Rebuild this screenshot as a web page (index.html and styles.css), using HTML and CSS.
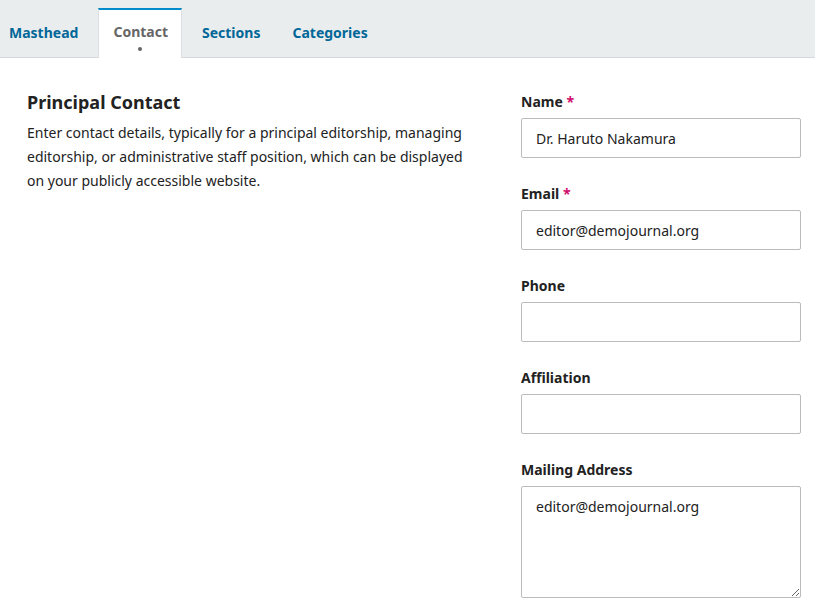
FILE: index.html
```html
<!DOCTYPE html>
<html lang="en">
<head>
<meta charset="UTF-8" />
<title>Journal Settings - Contact</title>
<link rel="stylesheet" href="styles.css">
</head>
<body>

<nav class="tabs">
  <a href="#" class="tab tab-first">Masthead</a>
  <a href="#" class="tab tab-active">Contact</a>
  <a href="#" class="tab tab-sections">Sections</a>
  <a href="#" class="tab">Categories</a>
</nav>

<main class="panel">
  <section class="intro">
    <h2>Principal Contact</h2>
    <p>Enter contact details, typically for a principal editorship, managing editorship, or administrative staff position, which can be displayed on your publicly accessible website.</p>
  </section>

  <form class="fields">
    <div class="field">
      <label for="name">Name <span class="req">*</span></label>
      <input type="text" id="name" value="Dr. Haruto Nakamura" />
    </div>
    <div class="field">
      <label for="email">Email <span class="req">*</span></label>
      <input type="text" id="email" value="editor@demojournal.org" />
    </div>
    <div class="field">
      <label for="phone">Phone</label>
      <input type="text" id="phone" />
    </div>
    <div class="field">
      <label for="affiliation">Affiliation</label>
      <input type="text" id="affiliation" />
    </div>
    <div class="field">
      <label for="address">Mailing Address</label>
      <textarea id="address">editor@demojournal.org</textarea>
    </div>
  </form>
</main>

</body>
</html>
```

FILE: styles.css
```css
:root {
  --blue: #006798;
  --blue-light: #008acb;
  --gray-bg: #eaedee;
  --border: #bbb;
  --text: #222;
}
body {
  margin: 0;
  font-family: 'Noto Sans', 'Open Sans', sans-serif;
  color: var(--text);
  background: white;
}
.tabs {
  display: flex;
  height: 57px;
  background: var(--gray-bg);
  border-bottom: 1px solid #d4d8da;
  box-sizing: content-box;
}
.tab {
  display: flex;
  align-items: center;
  padding: 8px 16px 0;
  font-size: 14px;
  font-weight: 700;
  color: var(--blue);
  text-decoration: none;
}
.tab-first {
  padding: 8px 20px 0 9px;
}
.tab-sections {
  padding-left: 20px;
}
.tab-active {
  position: relative;
  margin-top: 8px;
  margin-bottom: -1px;
  padding: 0 13px 6px 14px;
  background: white;
  border-top: 2px solid var(--blue-light);
  border-left: 1px solid #dcdfe0;
  border-right: 1px solid #dcdfe0;
  color: #666;
}
.tab-active::after {
  content: "";
  position: absolute;
  left: 50%;
  bottom: 7px;
  width: 4px;
  height: 4px;
  margin-left: -2px;
  border-radius: 50%;
  background: #666;
}
.panel {
  display: flex;
  justify-content: space-between;
  padding: 33px 14px 0 27px;
}
.intro {
  width: 440px;
}
.intro h2 {
  margin: 0 0 8px;
  font-size: 18px;
  line-height: 22px;
  font-weight: 700;
}
.intro p {
  margin: 0;
  font-size: 14px;
  line-height: 24px;
}
.fields {
  width: 280px;
  padding-top: 1px;
}
.field {
  margin-bottom: 26px;
}
.field label {
  display: block;
  margin-bottom: 6px;
  font-size: 14px;
  line-height: 20px;
  font-weight: 700;
}
.req {
  color: #d00a6c;
}
.field input, .field textarea {
  display: block;
  width: 100%;
  box-sizing: border-box;
  height: 40px;
  padding: 0 14px;
  border: 1px solid var(--border);
  border-radius: 2px;
  font-family: inherit;
  font-size: 14px;
  color: var(--text);
  background: white;
}
.field textarea {
  height: 112px;
  padding: 10px 14px;
  line-height: 20px;
  resize: vertical;
}
```
